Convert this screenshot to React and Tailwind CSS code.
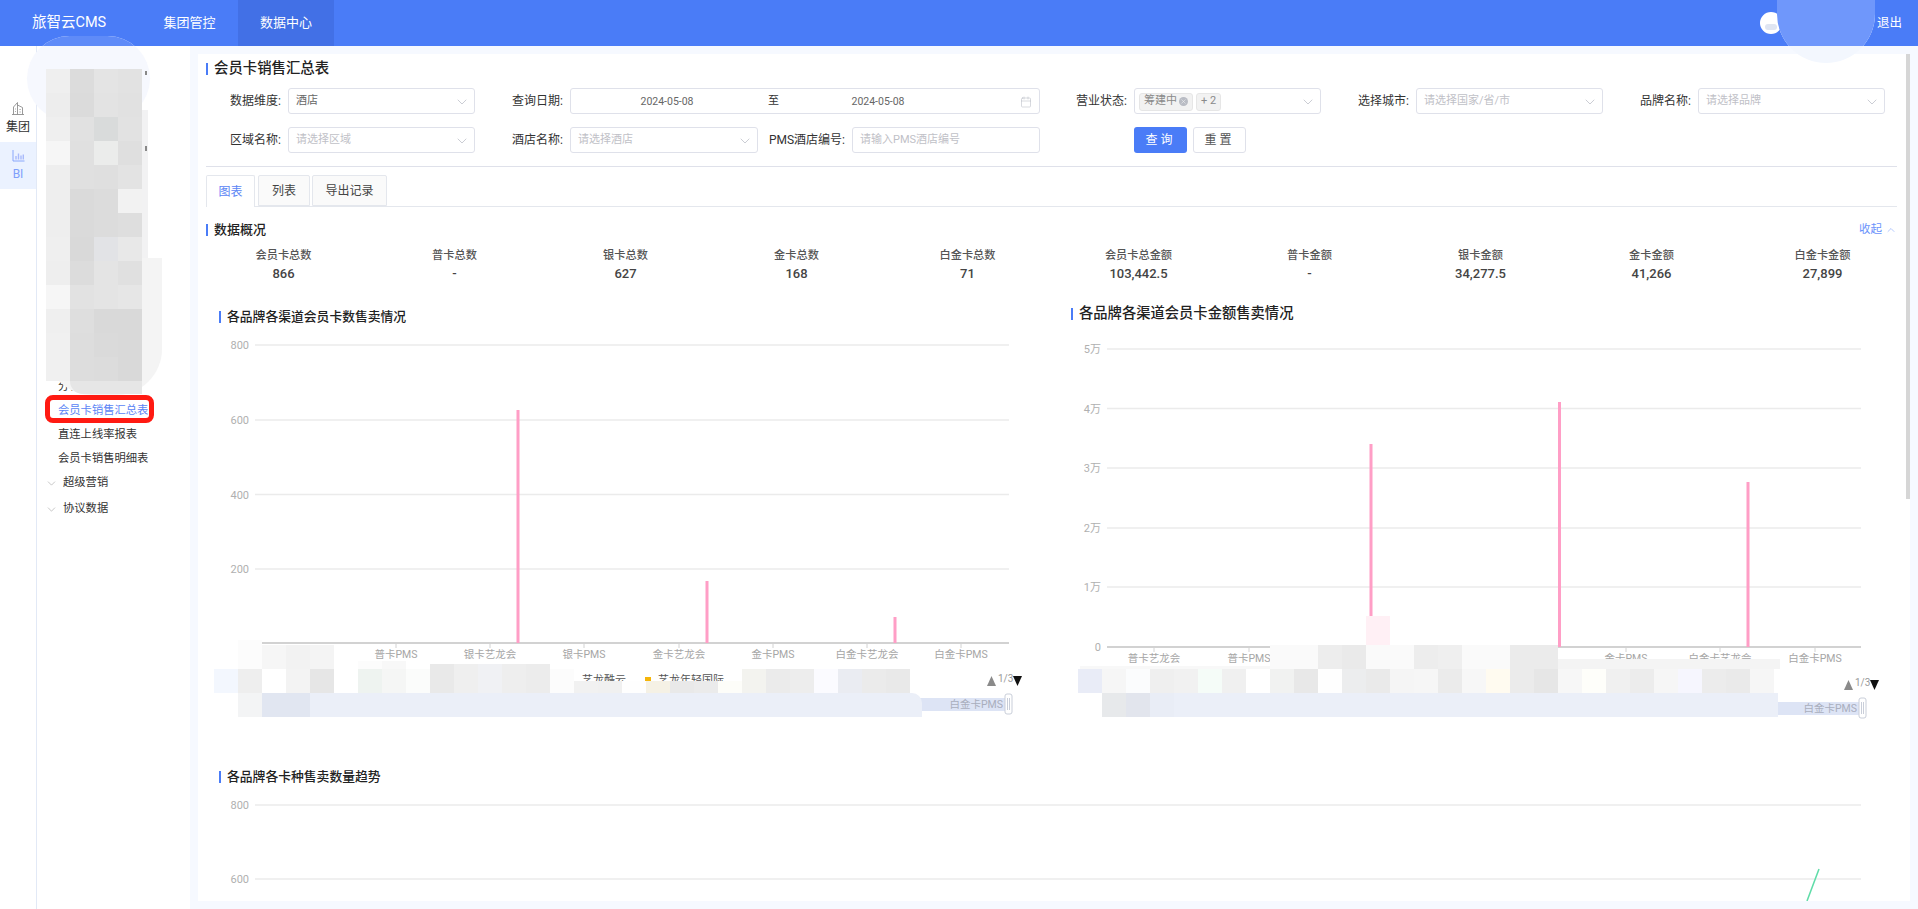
import { ChevronDown, ChevronUp, Calendar, X } from 'lucide-react'

const sideCells = [
  'bg-[#efefef]', 'bg-[#dcdcdc]', 'bg-[#e4e4e4]', 'bg-[#e2e2e2]',
  'bg-[#ededed]', 'bg-[#dbdbdb]', 'bg-[#e3e3e3]', 'bg-[#e1e1e1]',
  'bg-[#efefef]', 'bg-[#e1e1e1]', 'bg-[#d9dbdb]', 'bg-[#e2e2e2]',
  'bg-[#f6f6f6]', 'bg-[#e0e0e0]', 'bg-[#ebeceb]', 'bg-[#dfdfdf]',
  'bg-[#eeeeee]', 'bg-[#e0e0e0]', 'bg-[#dfdfdf]', 'bg-[#e3e3e3]',
  'bg-[#eeeeee]', 'bg-[#dadada]', 'bg-[#dcdcdc]', 'bg-[#f2f2f2]',
  'bg-[#eeeeee]', 'bg-[#dadada]', 'bg-[#dcdcdc]', 'bg-[#dedede]',
  'bg-[#efefef]', 'bg-[#d9d9d9]', 'bg-[#e2e3e6]', 'bg-[#e8e8e8]',
  'bg-[#eeeeee]', 'bg-[#dcdcdc]', 'bg-[#e4e4e4]', 'bg-[#e0e0e0]',
  'bg-[#f6f6f6]', 'bg-[#e2e2e2]', 'bg-[#e4e4e4]', 'bg-[#e6e6e6]',
  'bg-[#efefef]', 'bg-[#dedede]', 'bg-[#d9d9d9]', 'bg-[#d9d9d9]',
  'bg-[#f0f0f0]', 'bg-[#dddddd]', 'bg-[#dadada]', 'bg-[#d9d9d9]',
  'bg-[#f0f0f0]', 'bg-[#dddddd]', 'bg-[#dcdcdc]', 'bg-[#d9d9d9]',
]

const stats = [
  ['会员卡总数', '866'],
  ['普卡总数', '-'],
  ['银卡总数', '627'],
  ['金卡总数', '168'],
  ['白金卡总数', '71'],
  ['会员卡总金额', '103,442.5'],
  ['普卡金额', '-'],
  ['银卡金额', '34,277.5'],
  ['金卡金额', '41,266'],
  ['白金卡金额', '27,899'],
]

const labelsLeft = [
  [396, '普卡PMS'], [490, '银卡艺龙会'], [584, '银卡PMS'], [679, '金卡艺龙会'],
  [773, '金卡PMS'], [867, '白金卡艺龙会'], [961, '白金卡PMS'],
]
const labelsRight = [
  [1154, '普卡艺龙会'], [1249, '普卡PMS'], [1343, '银卡艺龙会'], [1437, '银卡PMS'],
  [1531, '金卡艺龙会'], [1626, '金卡PMS'], [1720, '白金卡艺龙会'], [1815, '白金卡PMS'],
]

function Mosaic({ className, cells }) {
  return (
    <div className={`absolute flex ${className}`}>
      {cells.map((c, i) => (
        <div key={i} className={`w-6 h-full ${c}`} />
      ))}
    </div>
  )
}

function SectionTitle({ children, className = '' }) {
  return (
    <div className={`flex items-center h-5 font-medium text-[#222] whitespace-nowrap ${className}`}>
      <span className="w-[2px] h-3 bg-[#4a7cf7] mr-[6px]" />
      {children}
    </div>
  )
}

function Field({ label, labelWidth = 'w-[75px]', width = 'w-[187px]', children, className = '' }) {
  return (
    <div className={`flex items-center ${className}`}>
      <span className={`${labelWidth} text-right text-[12px] text-[#333] mr-[7px] whitespace-nowrap`}>{label}</span>
      <div className={`${width} h-[26px] border border-[#dfe1ea] rounded-[3px] flex items-center px-[7px] pt-px text-[11px] relative`}>
        {children}
      </div>
    </div>
  )
}

function SelectText({ text, placeholder }) {
  return (
    <>
      <span className={placeholder ? 'text-[#bfc1c7]' : 'text-[#666]'}>{text}</span>
      <ChevronDown size={16} strokeWidth={1} className="ml-auto -mr-[3px] text-[#b0b4be]" />
    </>
  )
}

function ChartAxis({ x1, x2, grid, labels, tickLabelY, axisY }) {
  return (
    <>
      {grid.map(([y, t]) => (
        <g key={t}>
          {t !== '0' && <line x1={x1} x2={x2} y1={y} y2={y} stroke="#ebebeb" strokeWidth="1.5" />}
          <text x={x1 - 6} y={y + 4} textAnchor="end" fontSize="11" fill="#b0b0b0">{t}</text>
        </g>
      ))}
      <line x1={x1} x2={x2} y1={axisY} y2={axisY} stroke="#d2d2d2" strokeWidth="2" />
      {labels.map(([x, t]) => (
        <g key={t}>
          <line x1={x} x2={x} y1={axisY} y2={axisY + 5} stroke="#d2d2d2" />
          <text x={x} y={tickLabelY} textAnchor="middle" fontSize="10.5" fill="#a6a6a6">{t}</text>
        </g>
      ))}
    </>
  )
}

function Pager({ x, y }) {
  return (
    <g>
      <polygon points={`${x},${y + 10} ${x + 9},${y + 10} ${x + 4.5},${y}`} fill="#8a8a8a" />
      <text x={x + 11} y={y + 6} fontSize="10" fill="#999">1/3</text>
      <polygon points={`${x + 26},${y} ${x + 35},${y} ${x + 30.5},${y + 10}`} fill="#111" />
    </g>
  )
}

function Slider({ x1, x2, y }) {
  return (
    <g>
      <rect x={x1} y={y} width={x2 - x1} height="13" fill="#dde4f5" />
      <text x={x2 - 2} y={y + 10} textAnchor="end" fontSize="10.5" fill="#a9aebd">白金卡PMS</text>
      <rect x={x2} y={y - 4} width="7" height="20" rx="2" fill="#fff" stroke="#c9ced9" />
      <line x1={x2 + 2.5} x2={x2 + 2.5} y1={y} y2={y + 12} stroke="#c9ced9" />
      <line x1={x2 + 4.5} x2={x2 + 4.5} y1={y} y2={y + 12} stroke="#c9ced9" />
    </g>
  )
}

export default function App() {
  return (
    <div className="relative w-[1918px] h-[909px] overflow-hidden bg-[#f6f9ff] font-['Roboto','Noto_Sans_CJK_SC',sans-serif] text-[12px]">
      {/* Header */}
      <header className="h-[46px] bg-[#4a7cf7] flex items-center text-white">
        <div className="ml-8 text-[14.5px] w-[129px] whitespace-nowrap">旅智云CMS</div>
        <div className="w-[73px] text-[13px] text-center -ml-[8px] mr-3">集团管控</div>
        <div className="w-24 h-full bg-[#4270e6] flex items-center justify-center text-[13px]">数据中心</div>
        <div className="ml-auto w-[22px] h-[22px] rounded-full bg-white mr-[95px] overflow-hidden flex justify-center items-end">
          <span className="w-3 h-[6px] mb-[4px] rounded-full bg-[#dfe5f2]" />
        </div>
        <div className="mr-4 text-[12.5px]">退出</div>
      </header>

      <div className="flex h-[863px]">
        {/* Icon rail */}
        <div className="w-[37px] bg-white border-r border-[#e2e9f6] flex flex-col items-center pt-[55px]">
          <svg width="14" height="14" viewBox="0 0 14 14" fill="none" stroke="#8f8f8f" strokeWidth="0.9">
            <path d="M1 13.5h12M2.5 13.5V6l4-4.5v12M6.5 4l5 2.5v7M4.2 8h.8M4.2 10.5h.8M8.5 8.5h1.2M8.5 11h1.2" />
          </svg>
          <span className="text-[12px] text-[#333] mt-[3px]">集团</span>
          <div className="w-full mt-[6px] h-[47px] bg-[#ebf2ff] flex flex-col items-center justify-center">
            <svg width="13" height="13" viewBox="0 0 13 13" fill="none" stroke="#7f9ffb" strokeWidth="0.9">
              <path d="M1 1v11h11.5" />
              <path d="M4 10.5V7M6.5 10.5V4.5M9 10.5V6.5M11.3 10.5V5.5" strokeWidth="1.4" stroke="#a9bafb" />
            </svg>
            <span className="text-[12px] text-[#7f9ffb] mt-[3px]">BI</span>
          </div>
        </div>

        {/* Menu */}
        <aside className="w-[153px] bg-white pt-[329px] text-[11.3px] text-[#333] flex flex-col">
          <div className="h-6 flex items-center pl-[21px] whitespace-nowrap">分析报表</div>
          <div className="relative h-6 flex items-center pl-[21px] text-[#5b85f5] whitespace-nowrap">
            会员卡销售汇总表
            <span className="absolute left-[8px] -top-[4px] w-[109px] h-7 border-[5px] border-[#ff1a12] rounded-[8px]" />
          </div>
          <div className="h-6 flex items-center pl-[21px] whitespace-nowrap">直连上线率报表</div>
          <div className="h-6 flex items-center pl-[21px] whitespace-nowrap">会员卡销售明细表</div>
          <div className="h-6 flex items-center pl-[8px] whitespace-nowrap">
            <ChevronDown size={13} strokeWidth={1} className="text-[#999] mr-[5px]" />
            超级营销
          </div>
          <div className="h-6 mt-[2px] flex items-center pl-[8px] whitespace-nowrap">
            <ChevronDown size={13} strokeWidth={1} className="text-[#999] mr-[5px]" />
            协议数据
          </div>
        </aside>

        {/* Main */}
        <main className="relative ml-2 mt-2 w-[1712px] h-[847px] bg-white overflow-hidden pt-[5px]">
          <div className="absolute right-0 top-0 w-[4px] h-[445px] bg-[#d6d6d6]" />

          <SectionTitle className="ml-2 text-[14.4px]">会员卡销售汇总表</SectionTitle>

          <div className="ml-2 mt-[9px] flex gap-[13px]">
            <Field label="数据维度:"><SelectText text="酒店" /></Field>
            <Field label="查询日期:" width="w-[470px]">
              <div className="w-[178px] text-center text-[#666] text-[10.5px]">2024-05-08</div>
              <span className="ml-3 w-[10px] text-[#333] text-[11px]">至</span>
              <div className="ml-3 w-[176px] text-center text-[#666] text-[10.5px]">2024-05-08</div>
              <Calendar size={12} strokeWidth={1} className="ml-auto text-[#b0b4be]" />
            </Field>
            <Field label="营业状态:" labelWidth="w-[74px]">
              <span className="h-[18px] px-1 bg-[#f2f2f2] border border-[#e6e6e6] rounded-[3px] flex items-center text-[#8a8a8a] -ml-[3px] whitespace-nowrap">
                筹建中
                <span className="ml-[2px] w-[9px] h-[9px] rounded-full bg-[#b9bcc4] flex items-center justify-center">
                  <X size={7} strokeWidth={1.5} className="text-white" />
                </span>
              </span>
              <span className="h-[18px] px-[4px] ml-[3px] bg-[#f2f2f2] border border-[#e6e6e6] rounded-[3px] flex items-center text-[#8a8a8a] whitespace-nowrap">+ 2</span>
              <ChevronDown size={16} strokeWidth={1} className="ml-auto -mr-[3px] text-[#b0b4be]" />
            </Field>
            <Field label="选择城市:"><SelectText text="请选择国家/省/市" placeholder /></Field>
            <Field label="品牌名称:"><SelectText text="请选择品牌" placeholder /></Field>
          </div>

          <div className="ml-2 mt-[13px] flex">
            <Field label="区域名称:"><SelectText text="请选择区域" placeholder /></Field>
            <Field label="酒店名称:" width="w-[188px]" className="ml-[13px]"><SelectText text="请选择酒店" placeholder /></Field>
            <Field label="PMS酒店编号:" labelWidth="w-[87px]" width="w-[188px]"><span className="text-[#bfc1c7]">请输入PMS酒店编号</span></Field>
            <button className="ml-[94px] w-[53px] h-[26px] bg-[#4a7cf7] text-white rounded-[3px] tracking-[3px] text-[12px]">查询</button>
            <button className="ml-[6px] w-[53px] h-[26px] bg-white border border-[#dfe1ea] text-[#555] rounded-[3px] tracking-[3px] text-[12px]">重置</button>
          </div>

          <div className="ml-2 mt-[13px] w-[1691px] h-px bg-[#dfe1ea]" />

          {/* Tabs */}
          <div className="ml-2 mt-2 w-[1691px] h-8 flex border-b border-[#e4e7ed]">
            <div className="w-[49px] h-8 border border-b-0 border-[#e4e7ed] bg-white rounded-t-[2px] flex items-center justify-center text-[#5b85f5]">图表</div>
            <div className="ml-[3px] w-[52px] h-[31px] border border-[#e4e7ed] bg-[#fafafa] rounded-t-[2px] flex items-center justify-center text-[#444]">列表</div>
            <div className="ml-[2px] w-[75px] h-[31px] border border-[#e4e7ed] bg-[#fafafa] rounded-t-[2px] flex items-center justify-center text-[#444]">导出记录</div>
          </div>

          {/* Overview */}
          <div className="mt-[13px] flex items-center justify-between w-[1699px]">
            <SectionTitle className="ml-2 text-[13px]">数据概况</SectionTitle>
            <span className="flex items-center text-[11.5px] text-[#6b93fb]">
              收起
              <ChevronUp size={12} strokeWidth={1} className="ml-[3px]" />
            </span>
          </div>
          <div className="mt-[7px] grid grid-cols-10 w-[1710px]">
            {stats.map(([label, value]) => (
              <div key={label} className="text-center">
                <div className="h-[17px] leading-[18px] text-[11.2px] text-[#555] font-medium">{label}</div>
                <div className="h-[21px] leading-5 text-[13px] text-[#444] font-medium">{value}</div>
              </div>
            ))}
          </div>

          {/* Charts */}
          <div className="mt-[15px] flex">
            <div className="w-[862px] flex-none pt-[7px]">
              <SectionTitle className="ml-[21px] text-[12.8px]">各品牌各渠道会员卡数售卖情况</SectionTitle>
              <svg width="862" height="390" viewBox="198 335 862 390" className="mt-2 block">
                <ChartAxis
                  x1={255} x2={1009} axisY={643} tickLabelY={658}
                  grid={[[345, '800'], [420, '600'], [494.5, '400'], [569, '200']]}
                  labels={labelsLeft}
                />
                <rect x="516.5" y="410" width="3" height="233" fill="#ff9ec6" />
                <rect x="705.5" y="581" width="3" height="62" fill="#ff9ec6" />
                <rect x="893.5" y="617" width="3" height="26" fill="#ff9ec6" />
                <rect x="645" y="677" width="6" height="4" fill="#f5b50a" />
                <text x="582" y="684" fontSize="11" fill="#555">艺龙酷云</text>
                <text x="658" y="684" fontSize="11" fill="#555">艺龙年轻国际</text>
                <Pager x={987} y={676} />
                <Slider x1={920} x2={1005} y={698} />
              </svg>
            </div>
            <div className="w-[847px] flex-none pt-1">
              <SectionTitle className="ml-[11px] text-[14.3px]">各品牌各渠道会员卡金额售卖情况</SectionTitle>
              <svg width="847" height="392" viewBox="1060 333 847 392" className="mt-[9px] block">
                <ChartAxis
                  x1={1107} x2={1861} axisY={647} tickLabelY={662}
                  grid={[[349, '5万'], [408.5, '4万'], [468, '3万'], [528, '2万'], [587, '1万'], [647, '0']]}
                  labels={labelsRight}
                />
                <rect x="1369.5" y="444" width="3" height="203" fill="#ff9ec6" />
                <rect x="1558" y="402" width="3" height="245" fill="#ff9ec6" />
                <rect x="1746.5" y="482" width="3" height="165" fill="#ff9ec6" />
                <Pager x={1844} y={680} />
                <Slider x1={1770} x2={1859} y={702} />
              </svg>
            </div>
          </div>

          <SectionTitle className="mt-[42px] ml-[21px] text-[12.8px]">各品牌各卡种售卖数量趋势</SectionTitle>
          <svg width="1709" height="108" viewBox="198 793 1709 108" className="mt-[6px] block">
            <line x1="255" x2="1861" y1="805" y2="805" stroke="#ebebeb" strokeWidth="1.5" />
            <line x1="255" x2="1861" y1="879" y2="879" stroke="#ebebeb" strokeWidth="1.5" />
            <text x="249" y="809" textAnchor="end" fontSize="11" fill="#b0b0b0">800</text>
            <text x="249" y="883" textAnchor="end" fontSize="11" fill="#b0b0b0">600</text>
            <line x1="1819" y1="869" x2="1807" y2="901" stroke="#5fdca8" strokeWidth="1.5" />
          </svg>
        </main>
      </div>

      {/* Privacy mosaic over the account name */}
      <div className="absolute left-[1777px] top-0 w-[98px] h-[63px] bg-[#f3f7fe] rounded-b-[49px] overflow-hidden">
        <div className="h-[46px] bg-[#6f97fb]" />
      </div>

      {/* Privacy mosaic over the menu */}
      <div className="absolute left-[27px] top-[36px] w-[123px] h-[85px] bg-[#f6f8fe] rounded-[56px] overflow-hidden">
        <div className="h-[10px] bg-[#5f8bf8]" />
      </div>
      <div className="absolute left-[48px] top-[110px] w-[100px] h-[150px] bg-[#f2f2f3]" />
      <div className="absolute left-[46px] top-[258px] w-[116px] h-[137px] bg-[#f4f4f4] rounded-b-[46px]" />
      <div className="absolute left-[46px] top-[69px] w-24 grid grid-cols-4">
        {sideCells.map((c, i) => (
          <div key={i} className={`h-6 ${c}`} />
        ))}
      </div>
      <div className="absolute left-[70px] top-[381px] w-[72px] h-[13px] bg-[#e6e6e6] rounded-bl-[14px]" />
      <div className="absolute left-[145px] top-[71px] w-[2px] h-[4px] bg-[#888]" />
      <div className="absolute left-[145px] top-[146px] w-[2px] h-[5px] bg-[#888]" />

      {/* Privacy mosaic over the left chart legend */}
      <Mosaic className="left-[238px] top-[640px] h-[29px]" cells={['bg-[#fcfcfc]']} />
      <Mosaic className="left-[262px] top-[645px] h-6" cells={['bg-[#f6f6f6]', 'bg-[#f2f2f2]', 'bg-[#f4f4f4]']} />
      <Mosaic className="left-[358px] top-[661px] h-2" cells={['bg-[#fcfcfc]', 'bg-[#f8f8f8]']} />
      <Mosaic className="left-[430px] top-[664px] h-[5px]" cells={['bg-[#e9e9e9]', 'bg-[#efefef]', 'bg-[#f0f1f4]', 'bg-[#eeeeee]', 'bg-[#ececec]']} />
      <Mosaic
        className="left-[214px] top-[669px] h-6"
        cells={['bg-[#f3f7fe]', 'bg-[#eeeeee]', 'bg-[#ffffff]', 'bg-[#f3f3f3]', 'bg-[#e6e6e6]', 'bg-[#ffffff]', 'bg-[#eef3f0]', 'bg-[#f5f6f5]', 'bg-[#fbfcfb]', 'bg-[#e9e9e9]', 'bg-[#efefef]', 'bg-[#f0f1f4]', 'bg-[#eeeeee]', 'bg-[#ececec]', 'bg-[#fcfcfc]']}
      />
      <Mosaic
        className="left-[574px] top-[681px] h-3"
        cells={['bg-[#f1f1f1]', 'bg-[#f0f0f0]', 'bg-[#fefefe]', 'bg-[#f5f1e5]', 'bg-[#e9e9e9]', 'bg-[#ebebeb]', 'bg-[#fdfdf9]']}
      />
      <Mosaic
        className="left-[742px] top-[669px] h-6"
        cells={['bg-[#f3f3ef]', 'bg-[#ebebeb]', 'bg-[#ededed]', 'bg-[#fbfbff]', 'bg-[#eaecf2]', 'bg-[#ebebeb]', 'bg-[#e9e9e9]']}
      />
      <Mosaic className="left-[238px] top-[693px] h-6" cells={['bg-[#f3f4f5]', 'bg-[#e1e6f1]', 'bg-[#e1e6f1]']} />
      <div className="absolute left-[310px] top-[693px] w-[612px] h-6 bg-[#ebeff8] rounded-tr-[10px]" />

      {/* Privacy mosaic over the right chart legend */}
      <div className="absolute left-[1366px] top-[616px] w-6 h-[29px] bg-[#fff0f5]" />
      <Mosaic
        className="left-[1270px] top-[645px] h-6"
        cells={['bg-[#fafafa]', 'bg-[#fafafa]', 'bg-[#ededed]', 'bg-[#eaeaea]', 'bg-[#fafafa]', 'bg-[#fafafa]', 'bg-[#ededed]', 'bg-[#efefef]', 'bg-[#fafafa]', 'bg-[#fafafa]', 'bg-[#ebebeb]', 'bg-[#ebebeb]']}
      />
      <div className="absolute left-[1080px] top-[666px] w-[190px] h-[3px] bg-[#f8f8f8]" />
      <div className="absolute left-[1558px] top-[659px] w-[222px] h-[10px] bg-[#f4f4f4]" />
      <Mosaic
        className="left-[1078px] top-[669px] h-6"
        cells={['bg-[#e9ecf7]', 'bg-[#f6f6f6]', 'bg-[#fbfcfd]', 'bg-[#efefef]', 'bg-[#f1f1f1]', 'bg-[#f5fcf8]', 'bg-[#f0f0f0]', 'bg-[#ffffff]', 'bg-[#f1f2f1]', 'bg-[#e8e8e8]', 'bg-[#fefefe]', 'bg-[#ecedee]', 'bg-[#eaeaea]', 'bg-[#f5f5f5]', 'bg-[#f6f6f6]', 'bg-[#ebebeb]', 'bg-[#f7f7f7]', 'bg-[#fffbf0]', 'bg-[#ebebeb]', 'bg-[#e6e6e6]', 'bg-[#f7f7f7]', 'bg-[#fefefa]', 'bg-[#f0f0f0]', 'bg-[#ececec]', 'bg-[#f6f6f6]', 'bg-[#f6f6fe]', 'bg-[#ececec]', 'bg-[#eaeaea]', 'bg-[#f6f6f6]']}
      />
      <Mosaic className="left-[1102px] top-[693px] h-6" cells={['bg-[#e7e9eb]', 'bg-[#e2e5ed]', 'bg-[#e9edf6]']} />
      <div className="absolute left-[1174px] top-[693px] w-[604px] h-6 bg-[#ebeff8]" />
    </div>
  )
}
